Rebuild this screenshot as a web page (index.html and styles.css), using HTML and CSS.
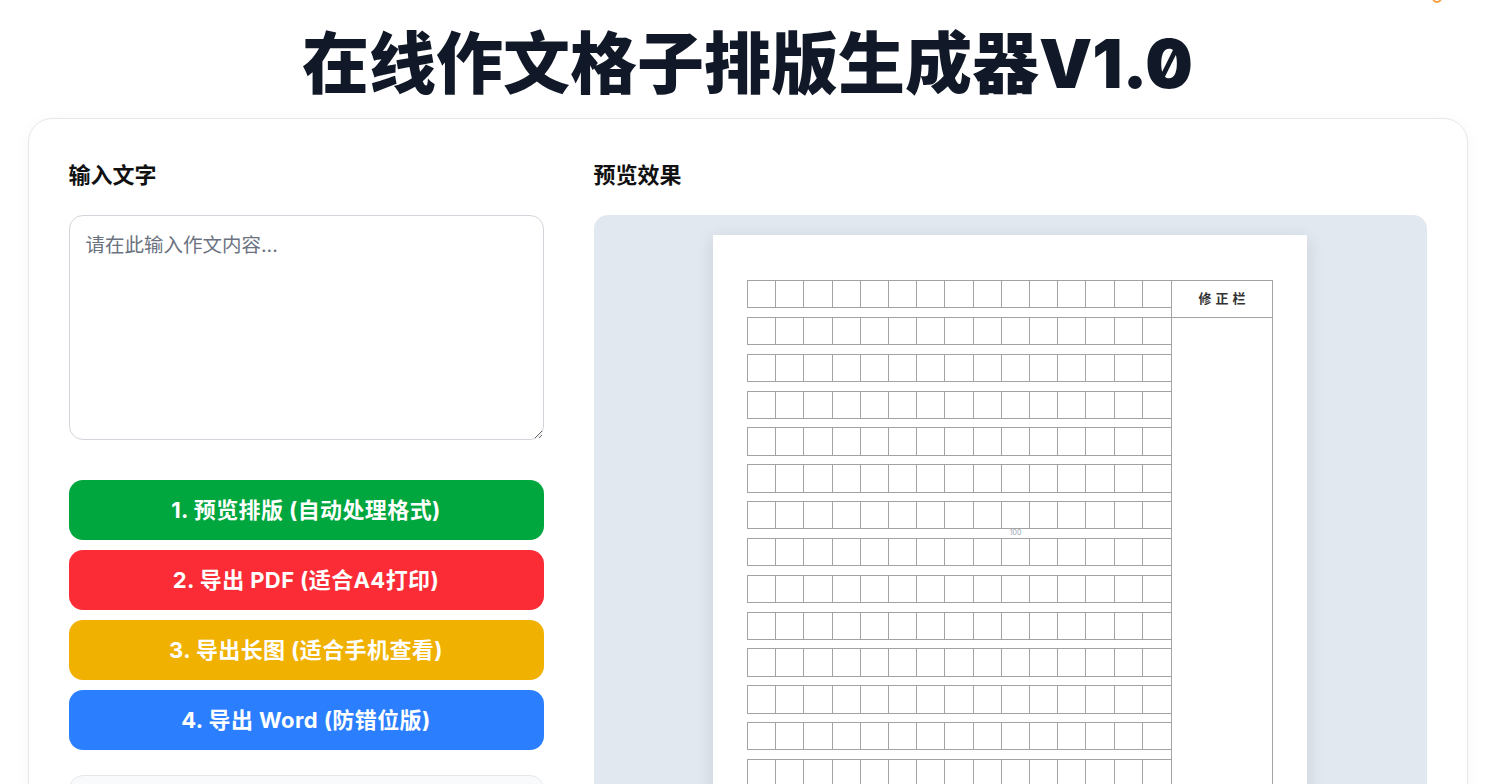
FILE: index.html
```html
<!DOCTYPE html>
<html lang="zh-CN">
<head>
    <meta charset="UTF-8">
    <meta name="viewport" content="width=device-width, initial-scale=1.0">
    <title>在线作文格子排版生成器V1.0</title>
    <link rel="stylesheet" href="styles.css">
</head>
<body>
    <span class="corner-mark"></span>
    <div class="page">
        <h1 class="title">在线作文格子排版生成器V1.0</h1>

        <div class="card">
            <div class="panel-left">
                <h2 class="label">输入文字</h2>
                <textarea class="input-text" id="content" placeholder="请在此输入作文内容..."></textarea>

                <div class="actions">
                    <button class="btn btn-green">1. 预览排版 (自动处理格式)</button>
                    <button class="btn btn-red">2. 导出 PDF (适合A4打印)</button>
                    <button class="btn btn-yellow">3. 导出长图 (适合手机查看)</button>
                    <button class="btn btn-blue">4. 导出 Word (防错位版)</button>
                </div>

                <div class="tips"></div>
            </div>

            <div class="panel-right">
                <h2 class="label">预览效果</h2>
                <div class="preview">
                    <div class="paper">
                        <div class="sheet">
                            <div class="rows" id="rows"></div>
                            <div class="fix-col">
                                <div class="fix-head">修正栏</div>
                            </div>
                        </div>
                    </div>
                </div>
            </div>
        </div>
    </div>

    <script>
        const COLS = 15;
        const ROWS = 20;

        function buildGrid() {
            const rows = document.getElementById('rows');
            for (let r = 0; r < ROWS; r++) {
                const row = document.createElement('div');
                row.className = 'row';
                for (let c = 0; c < COLS; c++) {
                    const cell = document.createElement('div');
                    cell.className = 'cell';
                    row.appendChild(cell);
                }
                rows.appendChild(row);

                if (r === ROWS - 1) break;

                const gap = document.createElement('div');
                gap.className = 'row-gap';
                for (let c = 0; c < COLS; c++) {
                    const slot = document.createElement('span');
                    const index = r * COLS + c + 1;
                    if (index % 100 === 0) slot.textContent = index;
                    gap.appendChild(slot);
                }
                rows.appendChild(gap);
            }
        }

        buildGrid();
    </script>
</body>
</html>
```

FILE: styles.css
```css
body {
    margin: 0;
    background-color: #fff;
    color: #111827;
    font-family: Inter, "Noto Sans CJK SC", sans-serif;
}

.corner-mark {
    position: absolute;
    top: -7px;
    right: 53px;
    width: 6px;
    height: 6px;
    border: 2px solid #f59e42;
    border-radius: 50%;
}

.page {
    max-width: 1440px;
    margin: 0 auto;
    padding-top: 24px;
}

.title {
    margin: 0 0 13.6px;
    text-align: center;
    font-size: 67px;
    font-weight: 900;
    line-height: 1.2;
    font-feature-settings: "zero";
    color: #111827;
}

.card {
    display: grid;
    grid-template-columns: 475px 1fr;
    gap: 50px;
    padding: 40px;
    background: #fff;
    border: 1px solid #e5e7eb;
    border-radius: 24px;
    box-shadow: 0 4px 16px rgba(0, 0, 0, 0.04);
}

.label {
    margin: 0 0 24px;
    font-size: 22px;
    font-weight: 700;
    line-height: 32px;
    color: #111;
}

.input-text {
    display: block;
    box-sizing: border-box;
    width: 100%;
    height: 225px;
    padding: 16px;
    border: 1px solid #d1d5db;
    border-radius: 14px;
    font-family: inherit;
    font-size: 19.5px;
    line-height: 27px;
    color: #111;
    resize: vertical;
}

.input-text::placeholder {
    color: #6b7280;
}

.actions {
    display: flex;
    flex-direction: column;
    gap: 10px;
    margin-top: 40px;
}

.btn {
    height: 60px;
    padding: 0 0 4px;
    border: none;
    border-radius: 14px;
    color: #fff;
    font-family: inherit;
    font-size: 22px;
    font-weight: 700;
    letter-spacing: 0.4px;
    cursor: pointer;
}

.btn-green { background-color: #00a63e; }
.btn-red { background-color: #fb2c36; }
.btn-yellow { background-color: #f0b100; }
.btn-blue { background-color: #2b7fff; }

.tips {
    margin-top: 25px;
    height: 160px;
    background: #f9fafb;
    border: 1px solid #e5e7eb;
    border-radius: 14px;
}

.preview {
    display: flex;
    justify-content: center;
    padding: 20px;
    background-color: #e2e8f0;
    border-radius: 14px;
}

.paper {
    width: 594px;
    box-sizing: border-box;
    padding: 45px 34px 60px;
    background: #fff;
    box-shadow: 0 4px 16px rgba(15, 23, 42, 0.12);
}

.sheet {
    display: flex;
}

.rows {
    flex: 1;
}

.row {
    display: grid;
    grid-template-columns: repeat(15, 1fr);
    box-sizing: border-box;
    height: 28.3px;
    border: 1px solid #a3a3a3;
    border-right: none;
}

.cell {
    border-right: 1px solid #a3a3a3;
}

.cell:last-child {
    border-right: none;
}

.row-gap {
    display: grid;
    grid-template-columns: repeat(15, 1fr);
    height: 8.55px;
    font-size: 7px;
    line-height: 8.55px;
    text-align: center;
    color: #9ca3af;
}

.fix-col {
    width: 102px;
    box-sizing: border-box;
    border: 1px solid #a3a3a3;
}

.fix-head {
    box-sizing: border-box;
    height: 36.85px;
    border-bottom: 1px solid #a3a3a3;
    font-size: 13px;
    font-weight: 700;
    line-height: 35px;
    letter-spacing: 4px;
    text-indent: 4px;
    text-align: center;
    color: #333;
}
```
